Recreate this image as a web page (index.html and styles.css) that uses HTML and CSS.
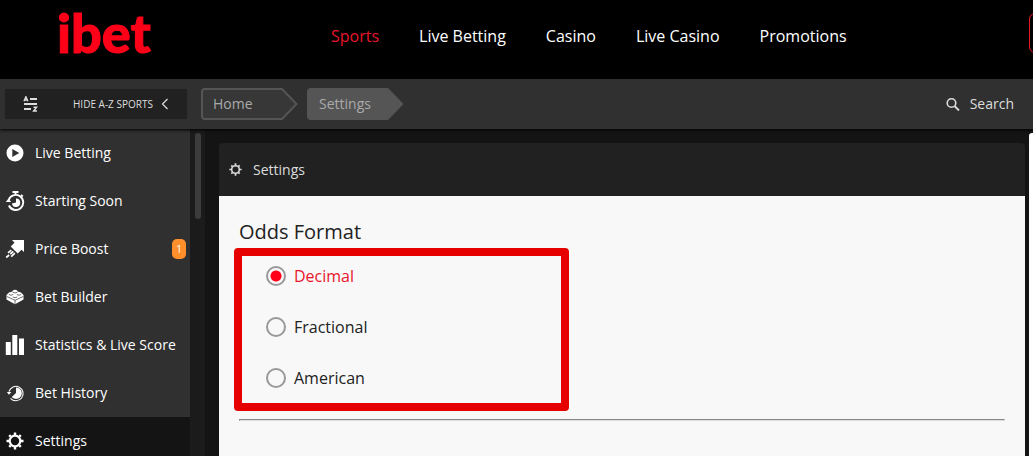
FILE: index.html
```html
<!DOCTYPE html>
<html lang="en">

<head>
	<meta charset="UTF-8">
	<meta name="viewport" content="width=device-width, initial-scale=1.0">
	<title>ibet - Settings</title>
	<link rel="stylesheet" href="styles.css">
</head>

<body>
	<svg width="0" height="0" class="sprites" aria-hidden="true">
		<symbol id="gear" viewBox="0 0 18 18">
			<circle cx="9" cy="9" r="5.300" fill="none" stroke="currentColor" stroke-width="2.200"/>
			<g stroke="currentColor" stroke-width="2.400">
				<path d="M9 .5v2.500M9 15v2.500M.5 9H3M15 9h2.500M3.200 3.200l1.500 1.500M13.300 13.300l1.500 1.500M3.200 14.800l1.500-1.500M13.300 4.700l1.500-1.500"/>
			</g>
		</symbol>
	</svg>
	<header class="header">
		<a class="logo" href="#">ibet</a>
		<nav class="nav">
			<a class="active" href="#">Sports</a>
			<a href="#">Live Betting</a>
			<a href="#">Casino</a>
			<a href="#">Live Casino</a>
			<a href="#">Promotions</a>
		</nav>
		<button class="login" type="button" aria-label="Log in"></button>
	</header>
	<div class="toolbar">
		<button class="toggle" type="button">
			<svg class="az" width="16" height="16" viewBox="0 0 16 16">
				<path d="M7 3h7M1 8h13M1 13h7" stroke="currentColor" stroke-width="2"/>
				<path d="M1 5.200L2.900.8 4.800 5.200M1.700 3.900h2.500M10.500 11.300h3L10.700 15h3.300" fill="none" stroke="currentColor" stroke-width="1.500"/>
			</svg>
			<span>HIDE A-Z SPORTS</span>
			<svg width="8" height="12" viewBox="0 0 8 12">
				<path d="M6.500 1L1.500 6l5 5" fill="none" stroke="currentColor" stroke-width="1.200"/>
			</svg>
		</button>
		<nav class="crumbs">
			<a class="crumb" href="#">
				<svg class="crumb-shape" width="97" height="32" viewBox="0 0 97 32">
					<path d="M4 1H81L95.500 16 81 31H4Q1 31 1 28V4Q1 1 4 1Z" fill="#373737" stroke="#555" stroke-width="2"/>
				</svg>
				<span>Home</span>
			</a>
			<a class="crumb" href="#">
				<svg class="crumb-shape" width="97" height="32" viewBox="0 0 97 32">
					<path d="M4 0H81L96.500 16 81 32H4Q0 32 0 28V4Q0 0 4 0Z" fill="#555"/>
				</svg>
				<span>Settings</span>
			</a>
		</nav>
		<button class="search" type="button">
			<svg width="14" height="14" viewBox="0 0 14 14">
				<circle cx="5.500" cy="6" r="4.300" fill="none" stroke="currentColor" stroke-width="1.600"/>
				<path d="M8.500 9l4.500 4.500" stroke="currentColor" stroke-width="1.800"/>
			</svg>
			<span>Search</span>
		</button>
	</div>
	<div class="page">
		<nav class="sidebar">
			<a href="#">
				<svg width="20" height="20" viewBox="0 0 20 20">
					<path fill="currentColor" fill-rule="evenodd" d="M10 1.500a8.500 8.500 0 1 0 0 17 8.500 8.500 0 1 0 0-17zM7.300 6v8l7-4z"/>
				</svg>
				<span>Live Betting</span>
			</a>
			<a href="#">
				<svg width="20" height="20" viewBox="0 0 20 20">
					<path d="M7.500 1h6M10.500 1v2.500M16 4l1.800 1.500" stroke="currentColor" stroke-width="1.900"/>
					<path d="M3.600 9.200A7.500 7.500 0 1 1 3.900 14.500" fill="none" stroke="currentColor" stroke-width="1.900"/>
					<path d="M.8 11L3.400 7.800 6.200 11z" fill="currentColor"/>
					<path d="M11 7.600A4.200 4.200 0 1 1 6.900 12.500L11 11.500z" fill="currentColor"/>
				</svg>
				<span>Starting Soon</span>
			</a>
			<a href="#">
				<svg width="20" height="20" viewBox="0 0 20 20">
					<path d="M7 1h12v12l-2.500-2.200-3.800 3.700-7-7 3.800-3.700z" fill="currentColor"/>
					<path d="M6.300 11.200l-3.300 2.600M8.300 12.400l-3 2.600M4.200 16l-3 2.500M9.800 14.200l-3.600 3.400" stroke="currentColor" stroke-width="1.700"/>
				</svg>
				<span>Price Boost</span>
				<b class="badge">1</b>
			</a>
			<a href="#">
				<svg width="20" height="20" viewBox="0 0 20 20">
					<path d="M1.500 8L4 5.500 7.500 4.500V3.700Q10 2 12.500 3.700v.8L16 5.500 18.500 8v4.500L10 17.200 1.500 12.500z" fill="currentColor"/>
					<g fill="none" stroke="#303030" stroke-width=".7">
						<path d="M1.800 9.500L10 13.300l8.200-3.800M10 13.300v4"/>
						<path d="M7.700 5.200q2.300 1.500 4.600 0M3.800 7.500q2.200 1.500 4.400 0M11.800 7.500q2.200 1.500 4.400 0M7.700 10q2.300 1.500 4.600 0"/>
					</g>
				</svg>
				<span>Bet Builder</span>
			</a>
			<a href="#">
				<svg width="20" height="20" viewBox="0 0 20 20">
					<path d="M.8 7h5v13h-5zM7.300 0h5v20h-5zM14 3.500h5V20h-5z" fill="currentColor"/>
				</svg>
				<span>Statistics &amp; Live Score</span>
			</a>
			<a href="#">
				<svg width="20" height="20" viewBox="0 0 20 20">
					<path d="M4 8.500A7.200 7.200 0 1 1 5.500 15.300" fill="none" stroke="currentColor" stroke-width="1.100"/>
					<path d="M1.800 9h4.600L4 11.800z" fill="currentColor"/>
					<path d="M11 10V4.500A5.700 5.700 0 1 1 6.800 14z" fill="currentColor"/>
				</svg>
				<span>Bet History</span>
			</a>
			<a class="current" href="#">
				<svg width="20" height="20" viewBox="0 0 20 20"><use href="#gear" x="1" y="1" width="18" height="18"/></svg>
				<span>Settings</span>
			</a>
		</nav>
		<div class="track"><div class="thumb"></div></div>
		<main class="main">
			<h1 class="panel-head">
				<svg width="14" height="14"><use href="#gear" width="13" height="13"/></svg>
				<span>Settings</span>
			</h1>
			<form class="panel-body">
				<h2 id="odds">Odds Format</h2>
				<fieldset class="options" aria-labelledby="odds">
					<label><input type="radio" name="odds" value="decimal" checked><span>Decimal</span></label>
					<label><input type="radio" name="odds" value="fractional"><span>Fractional</span></label>
					<label><input type="radio" name="odds" value="american"><span>American</span></label>
				</fieldset>
				<hr>
			</form>
		</main>
		<aside class="betslip"></aside>
	</div>
</body>

</html>
```

FILE: styles.css
```css
* {
	box-sizing: border-box;
}

body {
	margin: 0;
	height: 100vh;
	overflow: hidden;
	display: flex;
	flex-direction: column;
	background: #141414;
	color: #fff;
	font: 14px/20px "Open Sans", "Noto Sans", sans-serif;
}

a {
	color: inherit;
	text-decoration: none;
}

button {
	font: inherit;
	color: inherit;
	background: none;
	border: 0;
	padding: 0;
	cursor: pointer;
}

svg {
	flex: none;
}

.sprites {
	position: absolute;
}

.header {
	flex: none;
	display: flex;
	align-items: center;
	height: 79px;
	padding: 0 0 8px 57px;
	overflow: hidden;
	background: #000;
}

.logo {
	width: 274px;
	margin-bottom: 6px;
	color: #ff0019;
	font: 900 54px/64px Lato, sans-serif;
	-webkit-text-stroke: 1px #ff0019;
}

.nav {
	display: flex;
	gap: 40px;
	font-size: 16px;
	white-space: nowrap;
}

.nav .active {
	color: #e8152b;
}

.login {
	flex: none;
	width: 100px;
	height: 40px;
	margin: -6px -96px 0 auto;
	border: 1px solid #e8152b;
	border-radius: 6px;
}

.toolbar {
	flex: none;
	display: flex;
	align-items: center;
	height: 50px;
	padding: 0 19px 0 5px;
	background: #303030;
	color: #ddd;
	box-shadow: 0 1px 3px #000;
	z-index: 1;
}

.toggle {
	display: flex;
	align-items: center;
	width: 182px;
	height: 30px;
	padding-left: 18px;
	background: #212121;
	border-radius: 2px;
	font-size: 10px;
}

.toggle .az {
	margin-right: 34px;
}

.toggle span {
	margin-right: 8px;
}

.crumbs {
	display: flex;
	gap: 9px;
	margin-left: 14px;
	color: #aaa;
}

.crumb {
	display: grid;
	align-items: center;
}

.crumb > * {
	grid-area: 1 / 1;
}

.crumb span {
	padding-left: 12px;
	z-index: 1;
}

.search {
	display: flex;
	align-items: center;
	gap: 10px;
	margin-left: auto;
}

.page {
	flex: 1;
	display: flex;
	min-height: 0;
}

.sidebar {
	flex: none;
	width: 190px;
	overflow: hidden;
	background: #303030;
}

.sidebar a {
	display: flex;
	align-items: center;
	gap: 10px;
	height: 48px;
	padding: 0 4px 0 5px;
}

.sidebar .current {
	background: #141414;
}

.badge {
	margin-left: auto;
	width: 14px;
	background: #ff8f2b;
	border-radius: 5px;
	font-size: 10px;
	font-weight: normal;
	text-align: center;
}

.track {
	flex: none;
	width: 15px;
	padding: 4px 4px 0 5px;
	background: #1b1b1b;
}

.thumb {
	height: 86px;
	background: #3c3c3c;
	border-radius: 3px;
}

.main {
	flex: 1;
	display: flex;
	flex-direction: column;
	margin: 14px 4px 0 14px;
}

.panel-head {
	display: flex;
	align-items: center;
	gap: 10px;
	height: 53px;
	margin: 0;
	padding-left: 10px;
	background: #212121;
	border-radius: 4px 4px 0 0;
	color: #ddd;
	font-size: 14px;
	font-weight: normal;
}

.panel-body {
	flex: 1;
	padding: 24px 20px;
	background: #f8f8f8;
	color: #222;
}

.panel-body h2 {
	margin: 0 0 4px;
	font-size: 20px;
	line-height: 24px;
	font-weight: normal;
}

.options {
	display: flex;
	flex-direction: column;
	gap: 27px;
	max-width: 335px;
	margin: 0 0 0 -5px;
	padding: 8px 24px 13px;
	border: 8px solid #e60000;
	border-radius: 4px;
	font-size: 16px;
	line-height: 24px;
}

.options label {
	display: flex;
	align-items: center;
	gap: 8px;
}

.options input {
	appearance: none;
	width: 20px;
	height: 20px;
	margin: 0;
	border: 2px solid #999;
	border-radius: 50%;
}

.options input:checked {
	background: radial-gradient(circle, #ff0019 5px, transparent 6px);
}

.options input:checked + span {
	color: #e8152b;
}

.panel-body hr {
	margin: 8px 0 0;
	border: 1px solid;
	border-color: #888 #ddd #ddd #888;
}

.betslip {
	flex: none;
	width: 4px;
	margin-top: 4px;
	background: #fff;
	border-radius: 3px 0 0 0;
}
```
